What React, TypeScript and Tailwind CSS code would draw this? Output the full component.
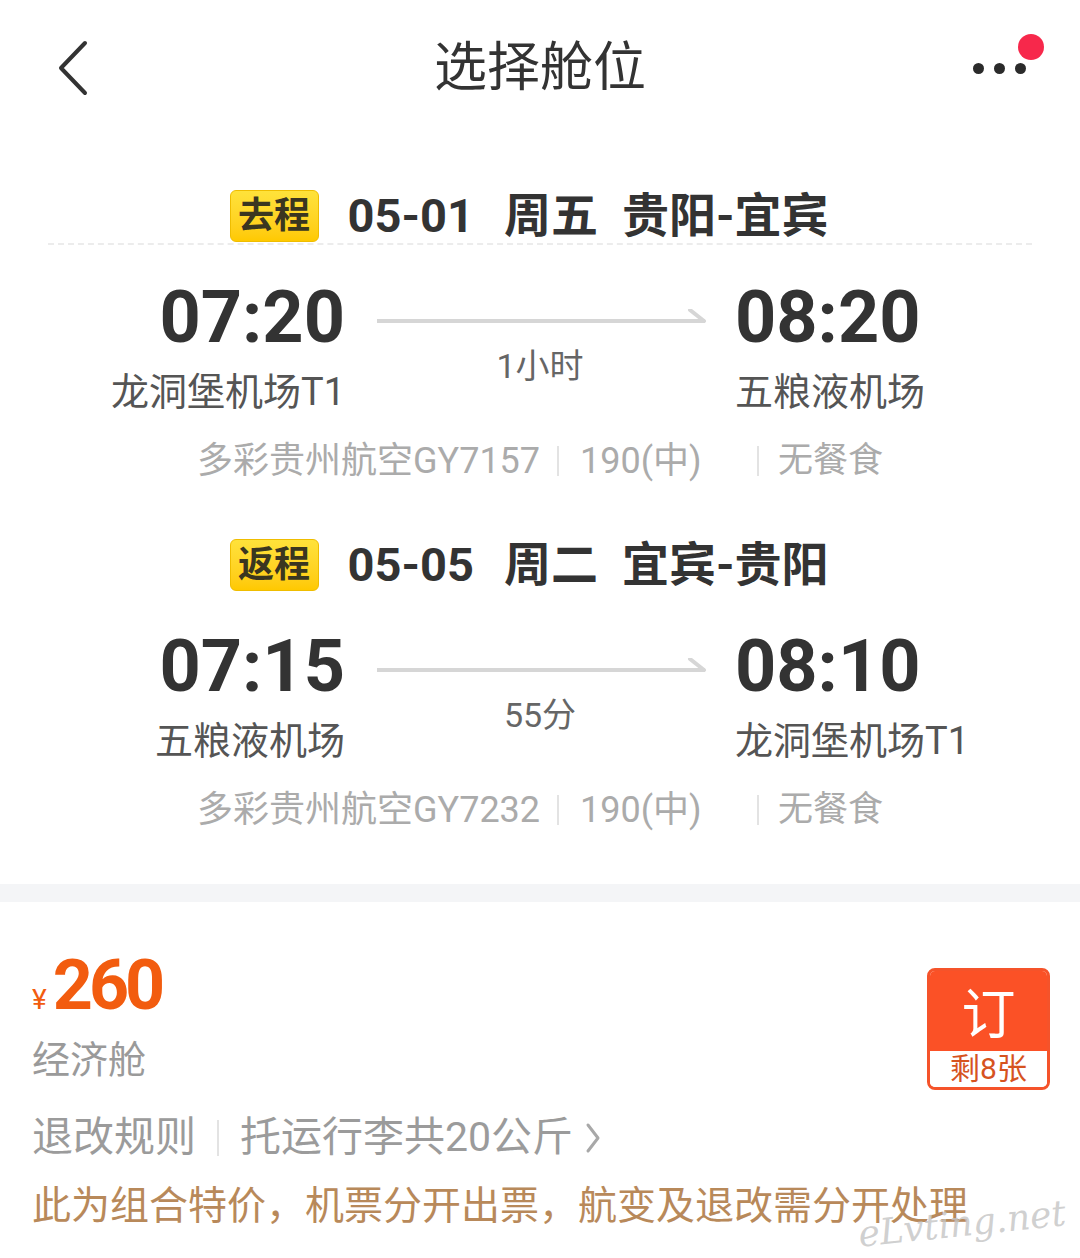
import React from 'react';

type Leg = {
  label: string;
  date: string;
  week: string;
  route: string;
  depTime: string;
  depAirport: string;
  arrTime: string;
  arrAirport: string;
  duration: string;
  flight: string;
  plane: string;
  meal: string;
  dashed: boolean;
};

const legs: Leg[] = [
  {
    label: '去程',
    date: '05-01',
    week: '周五',
    route: '贵阳-宜宾',
    depTime: '07:20',
    depAirport: '龙洞堡机场T1',
    arrTime: '08:20',
    arrAirport: '五粮液机场',
    duration: '1小时',
    flight: '多彩贵州航空GY7157',
    plane: '190(中)',
    meal: '无餐食',
    dashed: true,
  },
  {
    label: '返程',
    date: '05-05',
    week: '周二',
    route: '宜宾-贵阳',
    depTime: '07:15',
    depAirport: '五粮液机场',
    arrTime: '08:10',
    arrAirport: '龙洞堡机场T1',
    duration: '55分',
    flight: '多彩贵州航空GY7232',
    plane: '190(中)',
    meal: '无餐食',
    dashed: false,
  },
];

function Separator({ h = 'h-[30px]' }: { h?: string }) {
  return <div className={`w-[2px] ${h} bg-[#e3e3e3]`} />;
}

function FlightLeg({ leg }: { leg: Leg }) {
  return (
    <div>
      {/* 行程标题 */}
      <div
        className={`mx-[48px] h-[54px] pr-[22px] pb-[2px] flex items-center justify-center border-b-2 border-dashed ${
          leg.dashed ? 'border-[#ececec]' : 'border-transparent'
        }`}
      >
        <div className="w-[89px] h-[52px] rounded-[6px] bg-gradient-to-b from-[#ffe23a] to-[#ffc900] border border-[#efbd00] flex items-center justify-center">
          <span className="text-[36px] leading-[36px] font-bold text-[#3a3620]">{leg.label}</span>
        </div>
        <span className="ml-[29px] text-[47px] leading-[52px] font-bold text-[#333333]">{leg.date}</span>
        <span className="ml-[30px] text-[47px] leading-[52px] font-bold text-[#333333]">{leg.week}</span>
        <span className="ml-[24px] text-[47px] leading-[52px] font-bold text-[#333333]">{leg.route}</span>
      </div>

      {/* 时间 */}
      <div className="mt-[37px] grid grid-cols-[345px_390px_345px]">
        <div className="flex flex-col items-end">
          <span className="text-[72px] leading-[72px] font-bold text-[#333333]">{leg.depTime}</span>
          <span className="mt-[19px] text-[38px] leading-[38px] text-[#555555] whitespace-nowrap">{leg.depAirport}</span>
        </div>
        <div className="flex flex-col">
          <svg className="mt-[27px] ml-[32px]" width="330" height="16" viewBox="0 0 330 16">
            <line x1="0" y1="12" x2="328" y2="12" stroke="#d6d6d6" strokeWidth="4" />
            <line x1="327" y1="12" x2="313" y2="1" stroke="#d6d6d6" strokeWidth="4" strokeLinecap="round" />
          </svg>
          <span className="mt-[24px] text-center text-[34px] leading-[34px] text-[#666666]">{leg.duration}</span>
        </div>
        <div className="flex flex-col items-start">
          <span className="text-[72px] leading-[72px] font-bold text-[#333333]">{leg.arrTime}</span>
          <span className="mt-[19px] text-[38px] leading-[38px] text-[#555555] whitespace-nowrap">{leg.arrAirport}</span>
        </div>
      </div>

      {/* 航班信息 */}
      <div className="mt-[32px] pl-[197px] flex items-center text-[36px] leading-[36px] text-[#ababab]">
        <span className="w-[341px] text-right whitespace-nowrap">{leg.flight}</span>
        <div className="w-[40px] flex justify-center">
          <Separator />
        </div>
        <span className="w-[160px] pl-[2px] whitespace-nowrap">{leg.plane}</span>
        <div className="w-[40px] flex justify-center">
          <Separator />
        </div>
        <span className="text-[35px]">{leg.meal}</span>
      </div>
    </div>
  );
}

export default function App() {
  return (
    <div className="relative w-[1080px] min-h-[1258px] bg-white overflow-hidden font-[Roboto,'Noto_Sans_CJK_SC',sans-serif]">
      {/* 顶部导航 */}
      <div className="h-[136px] grid grid-cols-[1fr_auto_1fr] items-center">
        <div className="pl-[56px]">
          <svg width="34" height="56" viewBox="0 0 34 56" fill="none">
            <path d="M29 3 L5 28 L29 53" stroke="#333333" strokeWidth="4" strokeLinecap="round" strokeLinejoin="round" />
          </svg>
        </div>
        <h1 className="text-[53px] leading-[60px] text-[#333333]">选择舱位</h1>
        <div className="flex justify-end pr-[54px]">
          <div className="relative flex items-center gap-[10px]">
            <span className="w-[11px] h-[11px] rounded-full bg-[#2b2b2b]" />
            <span className="w-[11px] h-[11px] rounded-full bg-[#2b2b2b]" />
            <span className="w-[11px] h-[11px] rounded-full bg-[#2b2b2b]" />
            <span className="absolute -top-[29px] -right-[18px] w-[26px] h-[26px] rounded-full bg-[#f7284b]" />
          </div>
        </div>
      </div>

      {/* 行程 */}
      <div className="pt-[55px]">
        <FlightLeg leg={legs[0]} />
      </div>
      <div className="pt-[61px]">
        <FlightLeg leg={legs[1]} />
      </div>

      <div className="mt-[56px] h-[18px] bg-[#f4f5f7]" />

      {/* 舱位 */}
      <div className="pl-[32px] pt-[48px]">
        <div className="flex justify-between">
          <div className="flex flex-col">
            <div className="flex items-baseline text-[#f25c0f]">
              <span className="text-[28px] leading-[28px] mr-[6px]">¥</span>
              <span className="text-[70px] leading-[70px] font-bold tracking-[-4px]">260</span>
            </div>
            <span className="mt-[21px] text-[38px] leading-[38px] text-[#9a9a9a]">经济舱</span>
          </div>
          <div className="mt-[18px] mr-[30px] w-[123px] h-[122px] rounded-[8px] border-[3px] border-[#f5532a] overflow-hidden flex flex-col">
            <div className="flex-1 pt-[10px] bg-[#fb5126] flex items-center justify-center">
              <span className="text-[54px] leading-[54px] text-white">订</span>
            </div>
            <div className="h-[36px] bg-white flex items-center justify-center">
              <span className="text-[30px] leading-[30px] text-[#d6531f]">剩8张</span>
            </div>
          </div>
        </div>

        <div className="mt-[27px] flex items-center text-[41px] leading-[41px] text-[#9b9b9b]">
          <span>退改规则</span>
          <div className="mx-[21px]">
            <Separator h="h-[36px]" />
          </div>
          <span>托运行李共20公斤</span>
          <svg className="ml-[12px]" width="16" height="32" viewBox="0 0 16 32" fill="none">
            <path d="M3 3 L13 16 L3 29" stroke="#a8a8a8" strokeWidth="3" strokeLinecap="round" strokeLinejoin="round" />
          </svg>
        </div>

        <p className="mt-[29px] text-[39px] leading-[39px] text-[#b8895a] whitespace-nowrap">
          此为组合特价，机票分开出票，航变及退改需分开处理
        </p>
      </div>

      {/* 水印 */}
      <span className="absolute right-[14px] bottom-[16px] -rotate-[6deg] italic text-[36px] leading-[36px] text-[#c4c4c4]/80 font-['DejaVu_Serif',serif]">
        eLvting.net
      </span>
    </div>
  );
}
